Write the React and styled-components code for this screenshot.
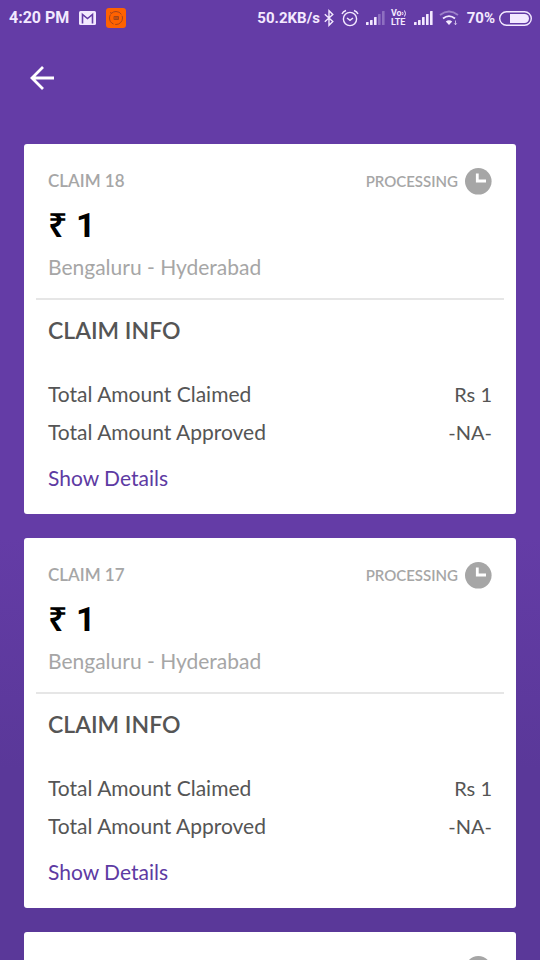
import React from "react";
import styled, { createGlobalStyle } from "styled-components";

const GlobalStyle = createGlobalStyle`
  *, *::before, *::after { box-sizing: border-box; }
  body { margin: 0; background: #5a3899; }
`;

const Screen = styled.div`
  height: 100vh;
  display: flex;
  flex-direction: column;
  overflow: hidden;
  background: linear-gradient(#643ca6 0%, #643ca6 56%, #5a3899 80%, #5a3899 100%);
  font-family: Lato, "Liberation Sans", sans-serif;
`;

const StatusBar = styled.div`
  flex: none;
  height: 36px;
  padding: 0 8px 0 9px;
  display: flex;
  align-items: center;
  justify-content: space-between;
  color: #f3e9ff;
  font: 700 15px/20px Roboto, sans-serif;
`;

const StatusGroup = styled.div`
  display: flex;
  align-items: center;
  gap: ${(p) => p.$gap}px;
`;

const Time = styled.span`
  font-size: 16px;
`;

const StatusIcon = styled.svg`
  display: block;
  flex: none;
`;

const TopBar = styled.header`
  flex: none;
  height: 84px;
  padding: 0 24px;
  display: flex;
  align-items: center;
`;

const BackButton = styled.button`
  width: 36px;
  height: 36px;
  padding: 0;
  border: 0;
  background: none;
  color: #fff;
  cursor: pointer;
  display: grid;
  place-items: center;
`;

const ClaimList = styled.main`
  flex: 1;
  min-height: 0;
  overflow-y: auto;
  scrollbar-width: none;
  padding: 24px;
  display: flex;
  flex-direction: column;
  gap: 24px;
`;

const Card = styled.article`
  flex: none;
  padding: 23px 12px 22px;
  background: #fff;
  border-radius: 3px;
`;

const Summary = styled.div`
  padding: 0 12px 17px;
  border-bottom: 2px solid #e6e6e6;
`;

const SummaryHead = styled.div`
  height: 28px;
  display: flex;
  align-items: center;
  justify-content: space-between;
  color: #a6a6a6;
`;

const ClaimName = styled.h2`
  margin: 0;
  font-size: 17px;
  line-height: 28px;
  font-weight: 600;
`;

const Status = styled.div`
  display: flex;
  align-items: center;
  gap: 6px;
  font-size: 15px;
  line-height: 28px;
  font-weight: 600;
`;

const Amount = styled.div`
  margin-top: 10px;
  color: #000;
  font: 700 34px/40px Roboto, sans-serif;
`;

const Rupee = styled.span`
  font-family: "Noto Sans", sans-serif;
  font-weight: 600;
  line-height: 1;
`;

const Route = styled.div`
  margin-top: 8px;
  color: #a6a6a6;
  font-size: 21px;
  line-height: 28px;
`;

const Info = styled.section`
  padding: 14px 12px 0;
`;

const InfoTitle = styled.h3`
  margin: 0 0 29px;
  color: #555;
  font-size: 23px;
  line-height: 32px;
  font-weight: 600;
`;

const Figures = styled.dl`
  margin: 0 0 13px;
`;

const Figure = styled.div`
  display: flex;
  justify-content: space-between;
  color: #555;
  font-size: 21px;
  line-height: 38px;

  dd {
    margin: 0;
    font-size: 20px;
  }
`;

const DetailsButton = styled.button`
  display: block;
  padding: 0;
  border: 0;
  background: none;
  color: #5d3aa3;
  font: 400 21px/28px Lato, "Liberation Sans", sans-serif;
  cursor: pointer;
`;

const MailIcon = () => (
  <StatusIcon width="17" height="14" viewBox="0 0 17 14" aria-hidden="true">
    <rect width="17" height="14" rx="1.5" fill="#f3e9ff" />
    <path d="M3.500 12.500V3.500l5 4 5-4v9" fill="none" stroke="#643ca6" strokeWidth="1.600" />
    <path d="M2.500 1.300h12L8.500 6z" fill="#f3e9ff" />
  </StatusIcon>
);

const OrangeAppIcon = () => (
  <StatusIcon width="20" height="20" viewBox="0 0 20 20" aria-hidden="true">
    <rect width="20" height="20" rx="3" fill="#ff6200" />
    <circle cx="10" cy="10" r="6.500" fill="none" stroke="#a8441a" strokeWidth="1" strokeDasharray="11 1.500" />
    <path d="M4 4.500l2 1" stroke="#a8441a" />
    <rect x="7.500" y="8" width="5.500" height="4" rx="1" fill="#a34618" />
    <path d="M9 9v2M11 9v2" stroke="#ff6200" strokeWidth="0.700" />
  </StatusIcon>
);

const BluetoothIcon = () => (
  <StatusIcon width="10" height="18" viewBox="0 0 10 18" fill="none" stroke="#f3e9ff" strokeWidth="1.400" aria-hidden="true">
    <path d="M.8 5.200l8 7.300L5 16.300V1.700l3.800 3.800-8 7.300" />
  </StatusIcon>
);

const AlarmIcon = () => (
  <StatusIcon width="18" height="18" viewBox="0 0 18 18" fill="none" stroke="#f3e9ff" strokeWidth="1.400" aria-hidden="true">
    <circle cx="9" cy="10" r="6.600" />
    <path d="M6 9l3 2.300L12 9M1 5Q2 2.500 5 1.500M17 5Q16 2.500 13 1.500" />
  </StatusIcon>
);

const SignalIcon = ({ level }) => (
  <StatusIcon width="20" height="15" viewBox="0 0 20 15" fill="#f3e9ff" aria-hidden="true">
    {[3, 5, 8, 11, 14].map((h, i) => (
      <rect key={h} x={i * 4 + 1} y={14 - h} width="2.600" height={h} rx="0.500" opacity={i < level ? 1 : 0.3} />
    ))}
  </StatusIcon>
);

const VolteBadge = styled.span`
  display: block;
  font: 700 9px/9px Roboto, sans-serif;

  span { display: flex; align-items: center; }
`;

const WifiIcon = () => (
  <StatusIcon width="21" height="16" viewBox="0 0 21 16" fill="none" strokeWidth="1.800" aria-hidden="true">
    <path d="M1 5Q10 -2 19 5" stroke="#f3e9ff" opacity="0.400" />
    <path d="M4 8.500Q10 3.800 16 8.500" stroke="#f3e9ff" />
    <path d="M6.800 11.500Q10 9 13.200 11.500L10 15z" fill="#f3e9ff" />
    <path d="M16.500 10.500v4m-1.300-1.200l1.300 1.500 1.300-1.500" stroke="#f3e9ff" strokeWidth="1" opacity="0.700" />
  </StatusIcon>
);

const BatteryIcon = () => (
  <StatusIcon width="33" height="15" viewBox="0 0 33 15" aria-hidden="true">
    <rect x="0.700" y="0.700" width="31.600" height="13.600" rx="6.800" fill="none" stroke="#f3e9ff" strokeWidth="1.400" />
    <path d="M11 3h14.500a4.500 4.500 0 0 1 0 9H11z" fill="#f3e9ff" />
  </StatusIcon>
);

const ArrowIcon = () => (
  <svg width="26" height="26" viewBox="0 0 26 26" fill="none" stroke="currentColor" strokeWidth="2.800" aria-hidden="true">
    <path d="M25 13H3.500M14 2L3 13l11 11" />
  </svg>
);

const ClockIcon = () => (
  <svg width="28" height="28" viewBox="0 0 28 28" aria-hidden="true">
    <circle cx="14.300" cy="14.300" r="13.300" fill="#a6a6a6" />
    <path d="M13.300 6.500v7.500H22" fill="none" stroke="#fff" strokeWidth="2.800" />
  </svg>
);

const claims = [
  { id: 18, amount: 1, route: "Bengaluru - Hyderabad" },
  { id: 17, amount: 1, route: "Bengaluru - Hyderabad" },
  { id: 16, amount: 1, route: "Bengaluru - Hyderabad" },
];

function ClaimCard({ claim }) {
  return (
    <Card>
      <Summary>
        <SummaryHead>
          <ClaimName>CLAIM {claim.id}</ClaimName>
          <Status>
            PROCESSING
            <ClockIcon />
          </Status>
        </SummaryHead>
        <Amount>
          <Rupee>₹</Rupee> {claim.amount}
        </Amount>
        <Route>{claim.route}</Route>
      </Summary>
      <Info>
        <InfoTitle>CLAIM INFO</InfoTitle>
        <Figures>
          <Figure>
            <dt>Total Amount Claimed</dt>
            <dd>Rs {claim.amount}</dd>
          </Figure>
          <Figure>
            <dt>Total Amount Approved</dt>
            <dd>-NA-</dd>
          </Figure>
        </Figures>
        <DetailsButton type="button">Show Details</DetailsButton>
      </Info>
    </Card>
  );
}

export default function App() {
  return (
    <Screen>
      <GlobalStyle />
      <StatusBar>
        <StatusGroup $gap={10}>
          <Time>4:20 PM</Time>
          <MailIcon />
          <OrangeAppIcon />
        </StatusGroup>
        <StatusGroup $gap={7}>
          <StatusGroup $gap={4}>
            <span>50.2KB/s</span>
            <BluetoothIcon />
          </StatusGroup>
          <StatusGroup $gap={6}>
            <AlarmIcon />
            <SignalIcon level={3} />
            <VolteBadge>
              <span>
                Vo
                <svg width="5" height="7" viewBox="0 0 5 7" fill="none" stroke="#f3e9ff" aria-hidden="true">
                  <path d="M.5 2q1 1.500 0 3M2.500.5q2 3 0 6" />
                </svg>
              </span>
              <span>LTE</span>
            </VolteBadge>
            <SignalIcon level={5} />
            <WifiIcon />
          </StatusGroup>
          <StatusGroup $gap={4}>
            <span>70%</span>
            <BatteryIcon />
          </StatusGroup>
        </StatusGroup>
      </StatusBar>
      <TopBar>
        <BackButton type="button" aria-label="Back">
          <ArrowIcon />
        </BackButton>
      </TopBar>
      <ClaimList>
        {claims.map((claim) => (
          <ClaimCard key={claim.id} claim={claim} />
        ))}
      </ClaimList>
    </Screen>
  );
}
